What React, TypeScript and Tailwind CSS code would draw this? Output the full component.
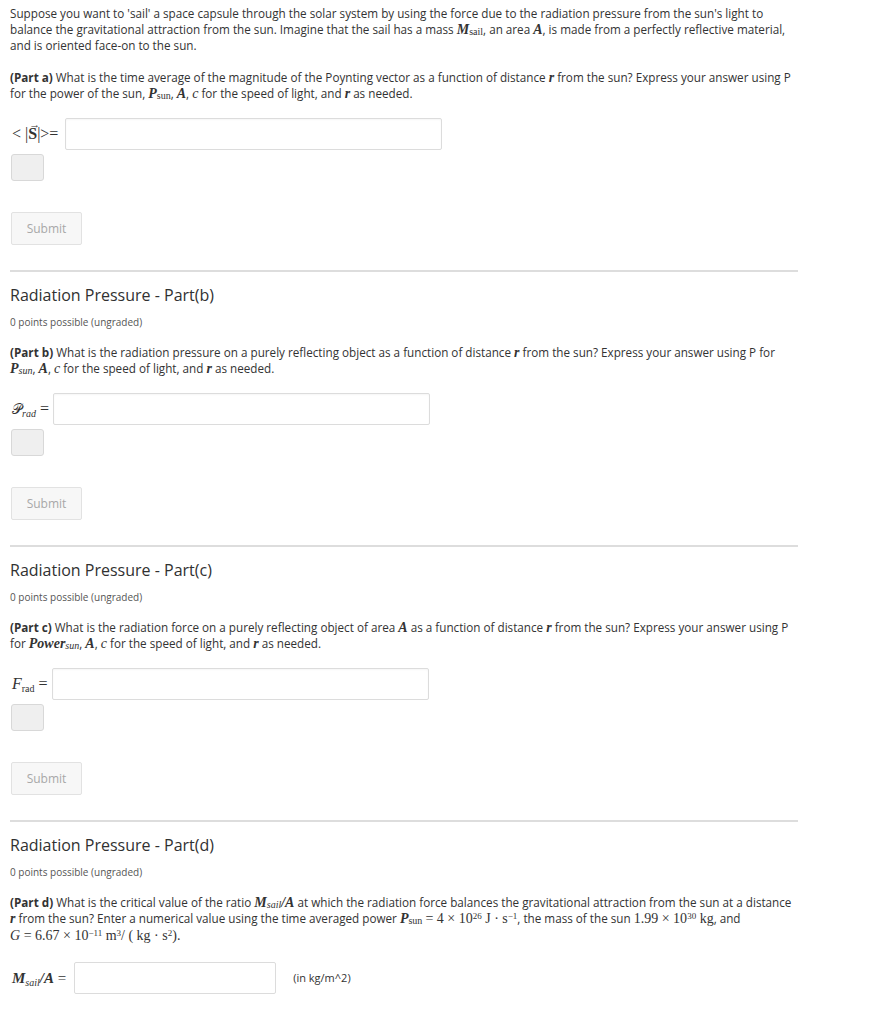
const serif = "font-['Liberation_Serif',serif]";

function M({ children }: { children: React.ReactNode }) {
  return <span className={`${serif} italic text-[14px] leading-none`}>{children}</span>;
}

function MB({ children }: { children: React.ReactNode }) {
  return <span className={`${serif} italic font-bold text-[14px] leading-none`}>{children}</span>;
}

function Sub({ children, italic }: { children: React.ReactNode; italic?: boolean }) {
  return (
    <sub className={`${serif} text-[10px] leading-none ${italic ? 'italic' : ''} relative top-[1px]`}>{children}</sub>
  );
}

function Sup({ children }: { children: React.ReactNode }) {
  return <sup className="text-[9px] leading-none">{children}</sup>;
}

function Answer({ label, width, pad }: { label: React.ReactNode; width: string; pad: string }) {
  return (
    <div className="flex items-center mt-[17px]">
      <div className={`${serif} text-[16px] text-[#333] pl-[2px] ${pad}`}>{label}</div>
      <div className={`h-[32px] ${width} border border-[#dcdcdc] rounded-[2px] bg-white shadow-[inset_0_1px_2px_rgba(0,0,0,0.04)]`} />
    </div>
  );
}

function Controls() {
  return (
    <>
      <div className="mt-[4px] ml-[1px] w-[33px] h-[27px] bg-[#efefef] border border-[#d8d8d8] rounded-[3px]" />
      <button className="mt-[31px] ml-[1px] w-[71px] h-[33px] bg-[#f7f7f7] border border-[#e2e2e2] rounded-[2px] text-[12px] text-[#a8a8a8]">
        Submit
      </button>
    </>
  );
}

function Header({ title }: { title: string }) {
  return (
    <>
      <div className="mt-[25px] h-[2px] bg-[#dddddd] w-[788px]" />
      <h2 className="mt-[13px] text-[16px] leading-[20px] text-[#313131]">{title}</h2>
      <div className="mt-[10px] text-[10px] leading-[14px] text-[#555]">0 points possible (ungraded)</div>
    </>
  );
}

export default function App() {
  return (
    <div className="min-h-[1024px] bg-white font-['Open_Sans',sans-serif] text-[11.7px] leading-[16px] text-[#333] pl-[10px] pt-[5px]">
      <div className="w-[820px]">
        <p>
          Suppose you want to 'sail' a space capsule through the solar system by using the force due to the radiation pressure from the sun's light to
          <br />
          balance the gravitational attraction from the sun. Imagine that the sail has a mass <MB>M</MB>
          <Sub>sail</Sub>, an area <MB>A</MB>, is made from a perfectly reflective material,
          <br />
          and is oriented face-on to the sun.
        </p>
        <p className="mt-[16px]">
          <b>(Part a)</b> What is the time average of the magnitude of the Poynting vector as a function of distance <MB>r</MB> from the sun? Express your answer using P
          <br />
          for the power of the sun, <MB>P</MB>
          <Sub>sun</Sub>, <MB>A</MB>, <M>c</M> for the speed of light, and <MB>r</MB> as needed.
        </p>
      </div>

      <Answer
        width="w-[377px]"
        pad="pr-[7px]"
        label={
          <span>
            &lt; |<b className="relative inline-block">
              S<span className="absolute left-[1px] -top-[10px] text-[11px]">&rarr;</span>
            </b>|&gt;=
          </span>
        }
      />
      <Controls />

      <Header title="Radiation Pressure - Part(b)" />
      <p className="mt-[15px] w-[820px]">
        <b>(Part b)</b> What is the radiation pressure on a purely reflecting object as a function of distance <MB>r</MB> from the sun? Express your answer using P for
        <br />
        <MB>P</MB>
        <Sub italic>sun</Sub>, <MB>A</MB>, <M>c</M> for the speed of light, and <MB>r</MB> as needed.
      </p>
      <Answer
        width="w-[377px]"
        pad="pr-[1px]"
        label={
          <span className="pr-[3px]">
            <span className="font-['DejaVu_Serif','DejaVu_Sans',serif] text-[14px]">𝒫</span>
            <sub className="italic text-[10px]">rad</sub> =
          </span>
        }
      />
      <Controls />

      <Header title="Radiation Pressure - Part(c)" />
      <p className="mt-[15px] w-[820px]">
        <b>(Part c)</b> What is the radiation force on a purely reflecting object of area <MB>A</MB> as a function of distance <MB>r</MB> from the sun? Express your answer using P
        <br />
        for <MB>Power</MB>
        <Sub italic>sun</Sub>, <MB>A</MB>, <M>c</M> for the speed of light, and <MB>r</MB> as needed.
      </p>
      <Answer
        width="w-[377px]"
        pad="pr-[1px]"
        label={
          <span className="pr-[3px]">
            <span className="italic">F</span>
            <sub className="text-[10px]">rad</sub> =
          </span>
        }
      />
      <Controls />

      <Header title="Radiation Pressure - Part(d)" />
      <p className="mt-[15px] w-[820px]">
        <b>(Part d)</b> What is the critical value of the ratio <MB>M</MB>
        <Sub italic>sail</Sub>
        <MB>/A</MB> at which the radiation force balances the gravitational attraction from the sun at a distance
        <br />
        <MB>r</MB> from the sun? Enter a numerical value using the time averaged power <MB>P</MB>
        <Sub>sun</Sub>{' '}
        <span className={`${serif} text-[14px] leading-none`}>
          = 4 × 10<Sup>26</Sup> J · s<Sup>−1</Sup>
        </span>
        , the mass of the sun <span className={`${serif} text-[14px] leading-none`}>1.99 × 10<Sup>30</Sup> kg</span>, and
        <span className={`block mt-[2px] ${serif} text-[14px] leading-[16px]`}>
          <i>G</i> = 6.67 × 10<Sup>−11</Sup> m<Sup>3</Sup>/ ( kg · s<Sup>2</Sup>).
        </span>
      </p>
      <div className="flex items-center mt-[18px]">
        <div className={`${serif} text-[15px] pl-[2px] pr-[8px]`}>
          <b className="italic">M</b>
          <sub className="italic text-[10px]">sail</sub>
          <b className="italic">/A</b> =
        </div>
        <div className="h-[32px] w-[202px] border border-[#dcdcdc] rounded-[2px] bg-white" />
        <span className="ml-[17px] text-[11px]">(in kg/m^2)</span>
      </div>
    </div>
  );
}
